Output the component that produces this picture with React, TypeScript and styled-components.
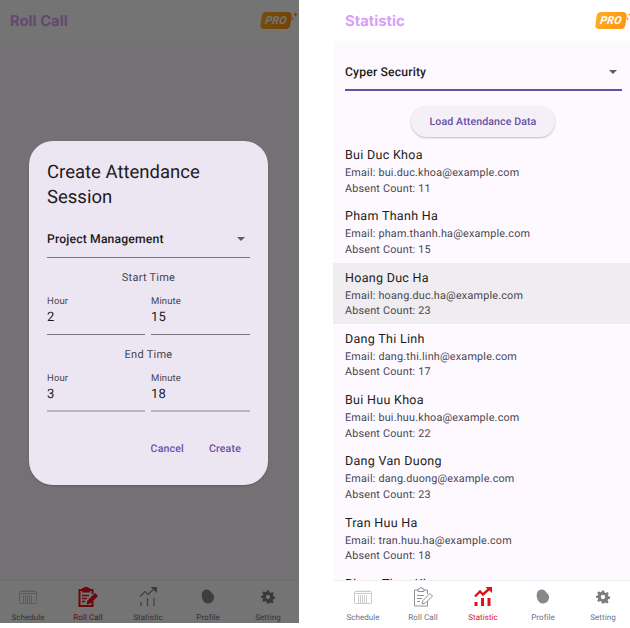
import React from "react";
import styled, { createGlobalStyle } from "styled-components";

const GlobalStyle = createGlobalStyle`
  html, body {
    margin: 0;
    padding: 0;
    background: #fff;
  }
  * {
    box-sizing: border-box;
  }
  body {
    font-family: Roboto, "Liberation Sans", sans-serif;
    text-rendering: geometricPrecision;
  }
`;

const Page = styled.div`
  display: flex;
  width: 630px;
  height: 628px;
  overflow: hidden;
  background: #fff;
`;

const Phone = styled.div<{ $width: number; $gap?: number }>`
  position: relative;
  display: flex;
  flex-direction: column;
  flex: none;
  width: ${({ $width }) => $width}px;
  height: 623px;
  margin-left: ${({ $gap }) => $gap || 0}px;
  background: #fff;
`;

const TopBar = styled.header<{ $left: number; $right: number }>`
  display: flex;
  flex: none;
  align-items: center;
  justify-content: space-between;
  height: 41px;
  padding: 0 ${({ $right }) => $right}px 0 ${({ $left }) => $left}px;
  background: #fff;
`;

const ScreenTitle = styled.h1`
  margin: 0;
  font-family: Inter, Roboto, sans-serif;
  font-size: 14.8px;
  font-weight: 700;
  color: #d9a0f7;
`;

const ProWrap = styled.div`
  position: relative;
  width: 30px;
  height: 17px;
`;

const ProBadge = styled.div`
  display: flex;
  align-items: center;
  justify-content: center;
  width: 30px;
  height: 17px;
  border-radius: 4px;
  background: linear-gradient(100deg, #ffad1f, #ff9416);
  transform: skewX(-8deg);
  color: #fff;
  font-size: 11px;
  font-weight: 700;
  font-style: italic;
  letter-spacing: 0.2px;
`;

const Sparks = styled.svg`
  position: absolute;
  left: 30px;
  top: 0;
`;

const Body = styled.main`
  flex: 1;
  min-height: 0;
  overflow: hidden;
  background: #fef9ff;
`;

const Filter = styled.div`
  padding: 0 8px 0 12px;
`;

const Select = styled.div<{ $active?: boolean }>`
  display: flex;
  align-items: center;
  justify-content: space-between;
  height: ${({ $active }) => ($active ? "50px" : "38px")};
  padding: ${({ $active }) => ($active ? "13px 5px 0 0" : "1px 5px 0 0")};
  border-bottom: ${({ $active }) =>
    $active ? "2px solid #6750a4" : "1px solid #7a7581"};
  color: #1d1b20;
  font-size: 12.2px;
  font-weight: 500;
  letter-spacing: 0.15px;
`;

const Caret = styled.span`
  width: 0;
  height: 0;
  border-left: 4px solid transparent;
  border-right: 4px solid transparent;
  border-top: 4px solid #5f5b66;
`;

const LoadRow = styled.div`
  display: flex;
  justify-content: center;
  padding: 15px 0 3px 3px;
`;

const LoadButton = styled.button`
  width: 144px;
  height: 31px;
  padding: 0;
  border: 0;
  border-radius: 16px;
  background: #f5eff8;
  box-shadow: 0 1px 2px rgba(0, 0, 0, 0.25);
  color: #6750a4;
  font-family: inherit;
  font-size: 10.6px;
  font-weight: 500;
  letter-spacing: 0.1px;
  text-rendering: inherit;
`;

const StudentRow = styled.div<{ $selected?: boolean }>`
  height: 61.25px;
  padding: 6px 12px 0;
  background: ${({ $selected }) => ($selected ? "#efedf0" : "transparent")};
  color: #49454f;
`;

const StudentName = styled.div`
  height: 19px;
  color: #1d1b20;
  font-size: 12.5px;
  line-height: 19px;
  letter-spacing: 0.3px;
`;

const StudentLine = styled.div`
  height: 15.5px;
  font-size: 10.8px;
  line-height: 15.5px;
  letter-spacing: 0.2px;
`;

const Nav = styled.nav`
  display: flex;
  flex: none;
  height: 43px;
  border-top: 1px solid #f3eef3;
  background: #fff;
`;

const NavItem = styled.div<{ $active?: boolean; $shift: number }>`
  display: flex;
  flex: 0 0 60px;
  flex-direction: column;
  align-items: center;
  margin-left: ${({ $shift }) => $shift}px;
  color: ${({ $active }) => ($active ? "#d32027" : "#6b7582")};
`;

const NavIconBox = styled.div`
  display: flex;
  align-items: center;
  justify-content: center;
  height: 31px;
`;

const NavLabel = styled.span`
  font-size: 8px;
  line-height: 11px;
  letter-spacing: 0.05px;
`;

const Scrim = styled.div`
  position: absolute;
  inset: 0;
  display: flex;
  align-items: flex-start;
  justify-content: center;
  padding: 141px 2px 0 0;
  background: rgba(0, 0, 0, 0.545);
`;

const Dialog = styled.section`
  width: 239px;
  height: 344px;
  padding: 19px 18px 0;
  border-radius: 24px;
  background: #ece6f3;
  box-shadow: 0 1px 2px rgba(0, 0, 0, 0.2);
  color: #1d1b20;
`;

const DialogTitle = styled.h2`
  margin: 0 0 10px;
  width: 170px;
  font-size: 18.5px;
  font-weight: 400;
  line-height: 25px;
`;

const GroupLabel = styled.div`
  padding-top: 13px;
  height: 33px;
  color: #49454f;
  font-size: 11px;
  line-height: 14px;
  text-align: center;
  letter-spacing: 0.25px;
`;

const TimeRow = styled.div`
  display: grid;
  grid-template-columns: 98px 99px;
  gap: 6px;
`;

const Field = styled.div<{ $soft?: boolean }>`
  height: 44px;
  padding-top: 5px;
  border-bottom: ${({ $soft }) =>
    $soft ? "2px solid #b9b4c0" : "1px solid #7a7581"};
`;

const FieldLabel = styled.div`
  color: #49454f;
  font-size: 9.5px;
  line-height: 12px;
  letter-spacing: 0.1px;
`;

const FieldValue = styled.div`
  margin-top: 1px;
  font-size: 13px;
  line-height: 17px;
  letter-spacing: 0.3px;
`;

const Actions = styled.div`
  display: flex;
  justify-content: flex-end;
  gap: 25px;
  padding: 30px 9px 0 0;
`;

const TextButton = styled.span`
  color: #6750a4;
  font-size: 10.6px;
  font-weight: 500;
  line-height: 14px;
  letter-spacing: 0.15px;
`;

const students = [
  { name: "Bui Duc Khoa", email: "bui.duc.khoa@example.com", absent: 11 },
  { name: "Pham Thanh Ha", email: "pham.thanh.ha@example.com", absent: 15 },
  { name: "Hoang Duc Ha", email: "hoang.duc.ha@example.com", absent: 23, selected: true },
  { name: "Dang Thi Linh", email: "dang.thi.linh@example.com", absent: 17 },
  { name: "Bui Huu Khoa", email: "bui.huu.khoa@example.com", absent: 22 },
  { name: "Dang Van Duong", email: "dang.duong@example.com", absent: 23 },
  { name: "Tran Huu Ha", email: "tran.huu.ha@example.com", absent: 18 },
  // scrolled off, only the top of the name shows above the nav
  { name: "Pham Thao Khoa" },
];

function CalendarIcon() {
  return (
    <svg width="18" height="14" viewBox="0 0 18 14" fill="none" stroke="#b4b4b8">
      <rect x="0.5" y="1.5" width="17" height="12" rx="1" strokeWidth="0.7" />
      <path d="M1 3.5h16" strokeWidth="0.7" />
      <path d="M3 1V0M6 1V0M9 1V0M12 1V0M15 1V0" strokeWidth="0.7" />
      <path d="M4 6h10M4 8h10M4 10h10M4 12h10" stroke="#9a9a9e" strokeWidth="1" strokeDasharray="1 1" />
    </svg>
  );
}

function RollCallIcon({ active }: { active?: boolean }) {
  const color = active ? "#f01015" : "#909095";
  const outline = active ? 2 : 1;
  return (
    <svg width="20" height="20" viewBox="0 0 20 20" fill="none" stroke={color} strokeWidth={outline}>
      <path d="M5 3H1.500v16h13V14M11 3h3.500v4" />
      <path d="M5 4.500V2h1.500a1.500 1.500 0 0 1 3 0H11v2.500z" fill={active ? color : "none"} />
      <path d="M4 8.500h7M4 11.500h5M4 14.500h3" strokeWidth={active ? 1.4 : 1} />
      <path d="M9 17l1-3.500 7-7 2.500 2.500-7 7z" fill={active ? color : "none"} strokeWidth={1} />
    </svg>
  );
}

function StatisticIcon({ active }: { active?: boolean }) {
  const color = active ? "#e01218" : "#86868a";
  const width = active ? 3 : 1.2;
  return (
    <svg width="18" height="19" viewBox="0 0 18 19" fill="none" stroke={color}>
      <path d="M2 15v4M8.500 11v8M15 11v8" strokeWidth={width} />
      <path d="M1 9.500l5-5 3 3 6-5.500" strokeWidth={active ? 2.4 : 1.1} />
      <path d="M11.500 0H18v6z" fill={color} stroke="none" />
    </svg>
  );
}

function ProfileIcon() {
  return (
    <svg width="14" height="15" viewBox="0 0 15 16">
      <path
        fill="#88888c"
        d="M1 4.500C1.500 1.500 4.500 0 7 .5c3 .6 3.400 2.600 5 4 1.800 1.500 2.500 3.600 1.800 6-.8 3-3.200 5-6 5C3.500 15.500 1.800 12 1 9c-.4-1.600-.3-3 0-4.500z"
      />
    </svg>
  );
}

function GearIcon() {
  return (
    <svg width="14" height="14" viewBox="-1 -1 26 26">
      <path
        fill="#7d7d81"
        fillRule="evenodd"
        d="M10 0h4l.7 3.400 2.300 1 3-1.900 2.800 2.800-1.900 3 1 2.300 3.100.7v4l-3.400.7-1 2.300 1.900 3-2.800 2.800-3-1.900-2.300 1L14 24h-4l-.7-3.400-2.300-1-3 1.900-2.800-2.800 1.900-3-1-2.300L-1 14v-4l3.100-.7 1-2.300-1.900-3L4 1.200l3 1.900 2.300-1zM12 8a4 4 0 1 0 0 8 4 4 0 0 0 0-8z"
      />
    </svg>
  );
}

function BottomNav({ active, offset }: { active: string; offset?: number }) {
  const items = [
    { label: "Schedule", icon: <CalendarIcon /> },
    { label: "Roll Call", icon: <RollCallIcon active={active === "Roll Call"} /> },
    { label: "Statistic", icon: <StatisticIcon active={active === "Statistic"} /> },
    { label: "Profile", icon: <ProfileIcon /> },
    { label: "Setting", icon: <GearIcon /> },
  ];
  return (
    <Nav>
      {items.map((item, i) => (
        <NavItem key={item.label} $active={item.label === active} $shift={i === 0 ? offset || 0 : 0}>
          <NavIconBox>{item.icon}</NavIconBox>
          <NavLabel>{item.label}</NavLabel>
        </NavItem>
      ))}
    </Nav>
  );
}

function Pro() {
  return (
    <ProWrap>
      <ProBadge>PRO</ProBadge>
      <Sparks width="8" height="10" viewBox="0 0 8 10" fill="#ff9a1a">
        <path d="M4.500 0l.8 1.700L7 2.500l-1.700.8L4.500 5l-.8-1.700L2 2.500l1.700-.8z" />
        <path d="M1.500 5l.5 1.300 1.300.5-1.300.5-.5 1.300-.5-1.300-1.300-.5 1.300-.5z" />
      </Sparks>
    </ProWrap>
  );
}

function TimeFields({ hour, minute, soft }: { hour: string; minute: string; soft?: boolean }) {
  return (
    <TimeRow>
      <Field $soft={soft}>
        <FieldLabel>Hour</FieldLabel>
        <FieldValue>{hour}</FieldValue>
      </Field>
      <Field $soft={soft}>
        <FieldLabel>Minute</FieldLabel>
        <FieldValue>{minute}</FieldValue>
      </Field>
    </TimeRow>
  );
}

export default function App() {
  return (
    <Page>
      <GlobalStyle />
      <Phone $width={299}>
        <TopBar $left={10} $right={8}>
          <ScreenTitle>Roll Call</ScreenTitle>
          <Pro />
        </TopBar>
        <Body />
        <BottomNav active="Roll Call" offset={-2} />
        <Scrim>
          <Dialog>
            <DialogTitle>Create Attendance Session</DialogTitle>
            <Select>
              Project Management
              <Caret />
            </Select>
            <GroupLabel>Start Time</GroupLabel>
            <TimeFields hour="2" minute="15" />
            <GroupLabel>End Time</GroupLabel>
            <TimeFields hour="3" minute="18" soft />
            <Actions>
              <TextButton>Cancel</TextButton>
              <TextButton>Create</TextButton>
            </Actions>
          </Dialog>
        </Scrim>
      </Phone>
      <Phone $width={297} $gap={34}>
        <TopBar $left={12} $right={4}>
          <ScreenTitle>Statistic</ScreenTitle>
          <Pro />
        </TopBar>
        <Body>
          <Filter>
            <Select $active>
              Cyper Security
              <Caret />
            </Select>
          </Filter>
          <LoadRow>
            <LoadButton>Load Attendance Data</LoadButton>
          </LoadRow>
          {students.map((student) => (
            <StudentRow key={student.name} $selected={student.selected}>
              <StudentName>{student.name}</StudentName>
              {student.email && (
                <>
                  <StudentLine>Email: {student.email}</StudentLine>
                  <StudentLine>Absent Count: {student.absent}</StudentLine>
                </>
              )}
            </StudentRow>
          ))}
        </Body>
        <BottomNav active="Statistic" />
      </Phone>
    </Page>
  );
}
